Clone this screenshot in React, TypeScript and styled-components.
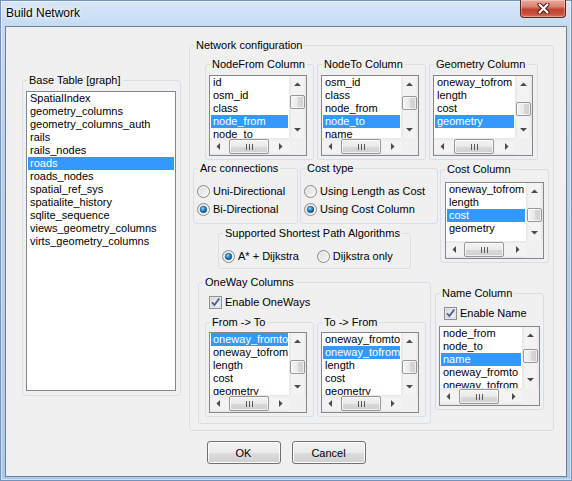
import React from 'react';
import styled, { createGlobalStyle } from 'styled-components';

const GlobalStyle = createGlobalStyle`
  html, body {
    margin: 0;
    padding: 0;
    background: #b3cfee;
  }
  body {
    font-family: "Liberation Sans", Arial, sans-serif;
    font-size: 11px;
    color: #000;
  }
`;

const Window = styled.div`
  width: 572px;
  height: 481px;
  box-sizing: border-box;
  display: flex;
  flex-direction: column;
  overflow: hidden;
  background: linear-gradient(to bottom, #d9e8f8 0px, #c5dbf2 26px, #b6d1ee 140px, #abc9ea 100%);
  box-shadow: inset 0 0 0 1px #7393ba, inset 0 0 0 2px rgba(255, 255, 255, 0.45);
`;

const TitleBar = styled.div`
  height: 26px;
  flex: none;
  display: flex;
  justify-content: space-between;
  align-items: flex-start;
  padding-left: 6px;
`;

const Title = styled.span`
  margin-top: 6px;
  font-size: 12px;
  line-height: 14px;
  text-shadow: 0 0 6px #fff, 0 0 3px #fff;
`;

const CloseButton = styled.div`
  width: 46px;
  height: 18px;
  margin-right: 6px;
  box-sizing: border-box;
  border: 1px solid #5e2620;
  border-top: none;
  border-radius: 0 0 4px 4px;
  background: linear-gradient(to bottom, #e9a99c 0%, #d9826f 40%, #c2412e 55%, #c74e3a 80%, #d77158 100%);
  box-shadow: inset 0 0 0 1px rgba(255, 255, 255, 0.3);
  display: flex;
  align-items: center;
  justify-content: center;
`;

const Client = styled.div`
  flex: 1;
  margin: 0 5px 4px 5px;
  border: 1px solid #6f7e90;
  background: #f0f0f0;
  display: flex;
  flex-direction: column;
`;

const MainRow = styled.div`
  display: flex;
  align-items: flex-start;
  gap: 8px;
  padding: 12px 0 0 16px;
`;

const GroupBox = styled.fieldset<{ $w: number; $mt?: number; $ml?: number }>`
  margin: ${p => p.$mt || 0}px 0 0 ${p => p.$ml || 0}px;
  padding: 0;
  min-width: 0;
  box-sizing: border-box;
  width: ${p => p.$w}px;
  flex: none;
  border: 1px solid #d5dfe5;
  border-radius: 3px;
`;

const Legend = styled.legend`
  margin-left: 4px;
  padding: 0 2px;
  font-size: 11px;
  line-height: 13px;
  white-space: nowrap;
`;

const GroupBody = styled.div<{ $pad: string; $gap?: number; $row?: boolean }>`
  padding: ${p => p.$pad};
  display: flex;
  flex-direction: ${p => (p.$row ? 'row' : 'column')};
  gap: ${p => p.$gap || 0}px;
`;

const Row = styled.div<{ $mt?: number; $mb?: number; $ml?: number; $gap: number }>`
  display: flex;
  align-items: flex-start;
  gap: ${p => p.$gap}px;
  margin: ${p => p.$mt || 0}px 0 ${p => p.$mb || 0}px ${p => p.$ml || 0}px;
`;

const Column = styled.div`
  display: flex;
  flex-direction: column;
  align-items: flex-start;
`;

/* list box */

const ListFrame = styled.div<{ $w: number; $h: number; $scroll: boolean }>`
  width: ${p => p.$w}px;
  height: ${p => p.$h}px;
  box-sizing: border-box;
  border: 1px solid #828790;
  background: #fff;
  display: grid;
  grid-template-columns: ${p => (p.$scroll ? '1fr 17px' : '1fr')};
  grid-template-rows: ${p => (p.$scroll ? '1fr 17px' : '1fr')};
  overflow: hidden;
  flex: none;
`;

const Items = styled.div`
  padding: 0 1px;
  overflow: hidden;
  min-width: 0;
`;

const Item = styled.div<{ $sel: boolean }>`
  height: 13px;
  line-height: 13px;
  padding-left: 2px;
  white-space: nowrap;
  overflow: hidden;
  background: ${p => (p.$sel ? '#3399ff' : 'transparent')};
  color: ${p => (p.$sel ? '#fff' : '#000')};
`;

const VScroll = styled.div`
  display: flex;
  flex-direction: column;
  background: linear-gradient(to right, #e6e6e6 0, #f3f3f3 3px, #f3f3f3 14px, #e6e6e6 100%);
  min-height: 0;
`;

const HScroll = styled.div`
  display: flex;
  background: linear-gradient(to bottom, #e6e6e6 0, #f3f3f3 3px, #f3f3f3 14px, #e6e6e6 100%);
  min-width: 0;
`;

const Corner = styled.div`
  background: #f0f0f0;
`;

const ArrowCell = styled.div`
  width: 17px;
  height: 17px;
  flex: none;
  display: flex;
  align-items: center;
  justify-content: center;
`;

const VTrack = styled.div`
  flex: 1;
  min-height: 0;
  padding: 0 1px;
`;

const HTrack = styled.div`
  flex: 1;
  min-width: 0;
  padding: 1px 0;
`;

const VThumb = styled.div<{ $off: number }>`
  margin-top: ${p => p.$off}px;
  height: 14px;
  box-sizing: border-box;
  border: 1px solid #979797;
  border-radius: 2px;
  background: linear-gradient(to right, #f4f4f4 0%, #e9e9e9 50%, #d9d9d9 51%, #cfcfcf 100%);
  box-shadow: inset 0 0 0 1px rgba(255, 255, 255, 0.7);
`;

const HThumb = styled.div<{ $off: number }>`
  margin-left: ${p => p.$off}px;
  width: 40px;
  height: 15px;
  box-sizing: border-box;
  border: 1px solid #979797;
  border-radius: 2px;
  background: linear-gradient(to bottom, #f4f4f4 0%, #e9e9e9 50%, #d9d9d9 51%, #cfcfcf 100%);
  box-shadow: inset 0 0 0 1px rgba(255, 255, 255, 0.7);
  display: flex;
  align-items: center;
  justify-content: center;
`;

const Arrow = ({ dir }: { dir: 'up' | 'down' | 'left' | 'right' }) => {
  const rot = { up: 0, right: 90, down: 180, left: 270 }[dir];
  return (
    <svg width="7" height="7" viewBox="0 0 7 7" style={{ transform: `rotate(${rot}deg)` }}>
      <polygon points="0,5 3.5,1.5 7,5" fill="#4a4a4a" />
    </svg>
  );
};

const Grip = () => (
  <svg width="7" height="6" viewBox="0 0 7 6">
    <path d="M0.5 0v6M3.5 0v6M6.5 0v6" stroke="#5a5a5a" strokeWidth="1" />
  </svg>
);

type ListProps = {
  items: string[];
  selected: number;
  w: number;
  h: number;
  scroll?: boolean;
  vthumb?: number;
  hthumb?: number;
};

const ListBox = ({ items, selected, w, h, scroll = true, vthumb = 2, hthumb = 2 }: ListProps) => (
  <ListFrame $w={w} $h={h} $scroll={scroll}>
    <Items>
      {items.map((it, i) => (
        <Item key={it} $sel={i === selected}>
          {it}
        </Item>
      ))}
    </Items>
    {scroll && (
      <>
        <VScroll>
          <ArrowCell>
            <Arrow dir="up" />
          </ArrowCell>
          <VTrack>
            <VThumb $off={vthumb} />
          </VTrack>
          <ArrowCell>
            <Arrow dir="down" />
          </ArrowCell>
        </VScroll>
        <HScroll>
          <ArrowCell>
            <Arrow dir="left" />
          </ArrowCell>
          <HTrack>
            <HThumb $off={hthumb}>
              <Grip />
            </HThumb>
          </HTrack>
          <ArrowCell>
            <Arrow dir="right" />
          </ArrowCell>
        </HScroll>
        <Corner />
      </>
    )}
  </ListFrame>
);

/* radio + checkbox */

const Choice = styled.label<{ $ml?: number }>`
  display: flex;
  align-items: center;
  gap: 3px;
  height: 13px;
  line-height: 13px;
  white-space: nowrap;
  margin-left: ${p => p.$ml || 0}px;
`;

const RadioIcon = ({ on }: { on?: boolean }) => (
  <svg width="13" height="13" viewBox="0 0 13 13">
    <defs>
      <linearGradient id="rfill" x1="0" y1="0" x2="1" y2="1">
        <stop offset="0" stopColor="#d6d6d6" />
        <stop offset="1" stopColor="#fdfdfd" />
      </linearGradient>
      <radialGradient id="rdot" cx="0.4" cy="0.35" r="0.7">
        <stop offset="0" stopColor="#9ad9fb" />
        <stop offset="0.45" stopColor="#2a8ad4" />
        <stop offset="1" stopColor="#0b3f77" />
      </radialGradient>
    </defs>
    <circle cx="6.5" cy="6.5" r="6" fill="url(#rfill)" stroke="#8a8a8a" />
    <circle cx="6.5" cy="6.5" r="4.5" fill="none" stroke="#f4f4f4" strokeWidth="1" />
    {on && <circle cx="6.5" cy="6.5" r="3.3" fill="url(#rdot)" stroke="#1c4f80" strokeWidth="0.6" />}
  </svg>
);

const CheckIcon = () => (
  <svg width="13" height="13" viewBox="0 0 13 13">
    <defs>
      <linearGradient id="cfill" x1="0" y1="0" x2="1" y2="1">
        <stop offset="0" stopColor="#dcdcdc" />
        <stop offset="1" stopColor="#fbfbfb" />
      </linearGradient>
    </defs>
    <rect x="0.5" y="0.5" width="12" height="12" fill="#f6f6f6" stroke="#8e8f8f" />
    <rect x="2" y="2" width="9" height="9" fill="url(#cfill)" stroke="#c0c0c0" strokeWidth="0.6" />
    <path d="M3 6.4 L5.4 9 L10.2 2.6" fill="none" stroke="#4a5f97" strokeWidth="1.8" />
  </svg>
);

const Radio = ({ label, on }: { label: string; on?: boolean }) => (
  <Choice>
    <RadioIcon on={on} />
    {label}
  </Choice>
);

/* dialog buttons */

const ButtonRow = styled.div`
  display: flex;
  justify-content: center;
  gap: 11px;
  margin-top: 10px;
`;

const DlgButton = styled.button`
  width: 74px;
  height: 23px;
  box-sizing: border-box;
  border: 1px solid #707070;
  border-radius: 3px;
  background: linear-gradient(to bottom, #f2f2f2 0%, #ebebeb 50%, #dddddd 51%, #cfcfcf 100%);
  box-shadow: inset 0 0 0 1px #fcfcfc;
  font-family: "Liberation Sans", Arial, sans-serif;
  font-size: 11px;
  color: #000;
  padding: 0;
`;

const baseTables = [
  'SpatialIndex',
  'geometry_columns',
  'geometry_columns_auth',
  'rails',
  'rails_nodes',
  'roads',
  'roads_nodes',
  'spatial_ref_sys',
  'spatialite_history',
  'sqlite_sequence',
  'views_geometry_columns',
  'virts_geometry_columns',
];

const oneways = ['oneway_fromto', 'oneway_tofrom', 'length', 'cost', 'geometry'];

export default function App() {
  return (
    <>
      <GlobalStyle />
      <Window>
        <TitleBar>
          <Title>Build Network</Title>
          <CloseButton>
            <svg width="13" height="11" viewBox="0 0 13 11">
              <path d="M2.5 1.5 L10.5 9.5 M10.5 1.5 L2.5 9.5" stroke="#3d1510" strokeWidth="4" strokeLinecap="round" />
              <path d="M2.5 1.5 L10.5 9.5 M10.5 1.5 L2.5 9.5" stroke="#fff" strokeWidth="2.2" strokeLinecap="round" />
            </svg>
          </CloseButton>
        </TitleBar>
        <Client>
          <MainRow>
            <GroupBox $w={159} $mt={35}>
              <Legend>Base Table [graph]</Legend>
              <GroupBody $pad="4px 4px 4px 3px">
                <ListBox items={baseTables} selected={5} w={150} h={300} scroll={false} />
              </GroupBody>
            </GroupBox>

            <GroupBox $w={365}>
              <Legend>Network configuration</Legend>
              <GroupBody $pad="6px 0 0 0">
                <Row $gap={3} $ml={15}>
                  <GroupBox $w={109}>
                    <Legend>NodeFrom Column</Legend>
                    <GroupBody $pad="4px 3px 3px 3px">
                      <ListBox items={['id', 'osm_id', 'class', 'node_from', 'node_to', 'name']} selected={3} w={98} h={81} vthumb={2} />
                    </GroupBody>
                  </GroupBox>
                  <GroupBox $w={109}>
                    <Legend>NodeTo Column</Legend>
                    <GroupBody $pad="4px 3px 3px 3px">
                      <ListBox items={['osm_id', 'class', 'node_from', 'node_to', 'name', 'oneway_fromto']} selected={3} w={98} h={81} vthumb={3} />
                    </GroupBody>
                  </GroupBox>
                  <GroupBox $w={109}>
                    <Legend>Geometry Column</Legend>
                    <GroupBody $pad="4px 3px 3px 3px">
                      <ListBox items={['oneway_tofrom', 'length', 'cost', 'geometry']} selected={3} w={100} h={81} vthumb={9} hthumb={3} />
                    </GroupBody>
                  </GroupBox>
                </Row>

                <Row $gap={2} $mt={2} $ml={3}>
                  <Column>
                    <Row $gap={2}>
                      <GroupBox $w={105}>
                        <Legend>Arc connections</Legend>
                        <GroupBody $pad="10px 3px 7px 3px" $gap={5}>
                          <Radio label="Uni-Directional" />
                          <Radio label="Bi-Directional" on />
                        </GroupBody>
                      </GroupBox>
                      <GroupBox $w={138}>
                        <Legend>Cost type</Legend>
                        <GroupBody $pad="10px 3px 7px 3px" $gap={5}>
                          <Radio label="Using Length as Cost" />
                          <Radio label="Using Cost Column" on />
                        </GroupBody>
                      </GroupBox>
                    </Row>
                    <GroupBox $w={193} $mt={3} $ml={25}>
                      <Legend>Supported Shortest Path Algorithms</Legend>
                      <GroupBody $pad="10px 3px 5px 3px" $gap={18} $row>
                        <Radio label="A* + Dijkstra" on />
                        <Radio label="Dijkstra only" />
                      </GroupBody>
                    </GroupBox>
                  </Column>
                  <GroupBox $w={109} $mt={1}>
                    <Legend>Cost Column</Legend>
                    <GroupBody $pad="6px 3px 3px 4px">
                      <ListBox items={['oneway_tofrom', 'length', 'cost', 'geometry']} selected={2} w={99} h={77} vthumb={8} hthumb={1} />
                    </GroupBody>
                  </GroupBox>
                </Row>

                <Row $gap={4} $mt={7} $mb={6} $ml={8}>
                  <GroupBox $w={233}>
                    <Legend>OneWay Columns</Legend>
                    <GroupBody $pad="7px 4px 6px 6px">
                      <Choice $ml={4}>
                        <CheckIcon />
                        Enable OneWays
                      </Choice>
                      <Row $gap={3} $mt={7}>
                        <GroupBox $w={109}>
                          <Legend>From -&gt; To</Legend>
                          <GroupBody $pad="3px 3px 3px 3px">
                            <ListBox items={oneways} selected={0} w={98} h={81} vthumb={10} />
                          </GroupBody>
                        </GroupBox>
                        <GroupBox $w={109}>
                          <Legend>To -&gt; From</Legend>
                          <GroupBody $pad="3px 3px 3px 3px">
                            <ListBox items={oneways} selected={1} w={98} h={81} vthumb={10} />
                          </GroupBody>
                        </GroupBox>
                      </Row>
                    </GroupBody>
                  </GroupBox>
                  <GroupBox $w={109} $mt={11}>
                    <Legend>Name Column</Legend>
                    <GroupBody $pad="7px 3px 3px 3px">
                      <Choice $ml={5}>
                        <CheckIcon />
                        Enable Name
                      </Choice>
                      <Row $gap={0} $mt={6}>
                        <ListBox
                          items={['node_from', 'node_to', 'name', 'oneway_fromto', 'oneway_tofrom']}
                          selected={2}
                          w={101}
                          h={80}
                          vthumb={5}
                        />
                      </Row>
                    </GroupBody>
                  </GroupBox>
                </Row>
              </GroupBody>
            </GroupBox>
          </MainRow>

          <ButtonRow>
            <DlgButton>OK</DlgButton>
            <DlgButton>Cancel</DlgButton>
          </ButtonRow>
        </Client>
      </Window>
    </>
  );
}
